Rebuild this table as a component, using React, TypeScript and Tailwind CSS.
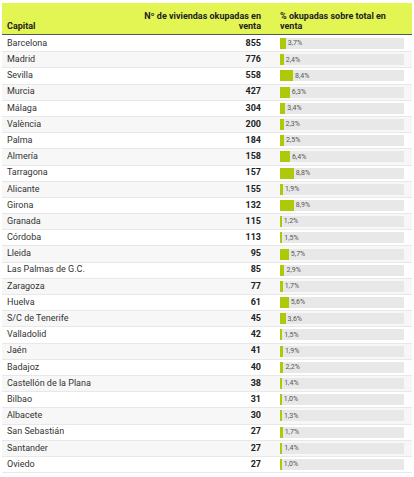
const rows: [string, number, number][] = [
  ["Barcelona", 855, 3.7],
  ["Madrid", 776, 2.4],
  ["Sevilla", 558, 8.4],
  ["Murcia", 427, 6.3],
  ["Málaga", 304, 3.4],
  ["València", 200, 2.3],
  ["Palma", 184, 2.5],
  ["Almería", 158, 6.4],
  ["Tarragona", 157, 8.8],
  ["Alicante", 155, 1.9],
  ["Girona", 132, 8.9],
  ["Granada", 115, 1.2],
  ["Córdoba", 113, 1.5],
  ["Lleida", 95, 5.7],
  ["Las Palmas de G.C.", 85, 2.9],
  ["Zaragoza", 77, 1.7],
  ["Huelva", 61, 5.6],
  ["S/C de Tenerife", 45, 3.6],
  ["Valladolid", 42, 1.5],
  ["Jaén", 41, 1.9],
  ["Badajoz", 40, 2.2],
  ["Castellón de la Plana", 38, 1.4],
  ["Bilbao", 31, 1.0],
  ["Albacete", 30, 1.3],
  ["San Sebastián", 27, 1.7],
  ["Santander", 27, 1.4],
  ["Oviedo", 27, 1.0],
]

export default function App() {
  return (
    <div className="w-[414px] h-[477px] bg-white pt-[3px] px-[2px] overflow-hidden" style={{ fontFamily: "Roboto, 'Liberation Sans', sans-serif" }}>
      {/* header */}
      <div className="grid grid-cols-[138px_126px_1fr] h-[32px] bg-[#e2f552] border-b-[1.5px] border-[#555] text-[9px] leading-[10px] font-bold text-[#222]">
        <div className="flex items-end pl-[5px] pb-[3px]">Capital</div>
        <div className="flex items-end justify-end text-right pr-[5px] pb-[3px]">
          Nº de viviendas okupadas en<br />venta
        </div>
        <div className="flex items-end pl-[14px] pb-[3px]">
          % okupadas sobre total en<br />venta
        </div>
      </div>

      {/* rows */}
      <div className="pt-[1px]">
        {rows.map(([city, n, pct], i) => (
          <div
            key={city}
            className={`grid grid-cols-[138px_126px_1fr] h-[16.2px] items-center border-b border-[#e8e8e8] ${i % 2 === 1 ? "bg-[#f7f7f7]" : "bg-white"}`}
          >
            <div className="pl-[5px] text-[9px] text-[#333] whitespace-nowrap">{city}</div>
            <div className="pr-[5px] text-right text-[9px] font-bold text-[#222]">{n}</div>
            <div className="pl-[14px] pr-[8px]">
              <div className="relative h-[11px] bg-[#e8e8e8] flex items-center">
                <div className="h-full bg-[#adc90a]" style={{ width: `${Math.max(pct * 1.55, 1.8)}px` }} />
                <span className="ml-[2px] text-[7px] text-[#555]">{pct.toFixed(1).replace(".", ",")}%</span>
              </div>
            </div>
          </div>
        ))}
      </div>
    </div>
  )
}
